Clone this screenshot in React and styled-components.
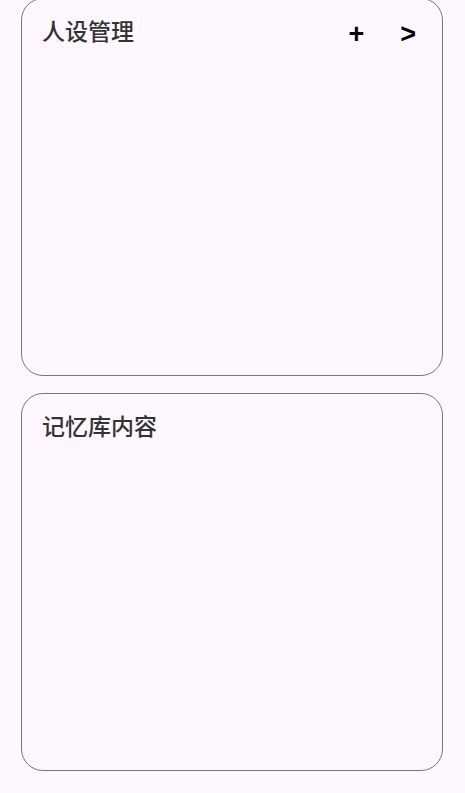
import React from "react";
import styled, { createGlobalStyle } from "styled-components";

const Global = createGlobalStyle`
  html, body { margin: 0; padding: 0; background: #fef7ff; }
  body { font-family: "Noto Sans CJK SC", "Noto Sans", sans-serif; }
`;

const Page = styled.div`
  display: flex;
  flex-direction: column;
  gap: 17px;
  padding: 0 22px 0 21px;
  margin-top: -2px;
  height: 795px;
  box-sizing: border-box;
  overflow: hidden;
`;

const Card = styled.section`
  height: 378px;
  box-sizing: border-box;
  border: 1px solid #79747e;
  border-radius: 22px;
  padding: 15px 20px;
  background: #fef7ff;
`;

const Header = styled.div`
  display: flex;
  align-items: flex-start;
  justify-content: space-between;
`;

const Title = styled.h2`
  margin: 0;
  font-size: 23px;
  font-weight: 500;
  color: #333333;
  line-height: 32px;
`;

const Actions = styled.div`
  display: flex;
  align-items: center;
  gap: 36px;
  margin-right: 6px;
  margin-top: 4px;
`;

const IconButton = styled.button`
  border: none;
  background: none;
  padding: 0;
  font-family: "Liberation Sans", Arial, sans-serif;
  font-weight: 700;
  font-size: 27px;
  line-height: 32px;
  color: #000;
  cursor: pointer;
`;

export default function App() {
  return (
    <>
      <Global />
      <Page>
        <Card>
          <Header>
            <Title>人设管理</Title>
            <Actions>
              <IconButton>+</IconButton>
              <IconButton>&gt;</IconButton>
            </Actions>
          </Header>
        </Card>
        <Card>
          <Header>
            <Title>记忆库内容</Title>
          </Header>
        </Card>
      </Page>
    </>
  );
}
